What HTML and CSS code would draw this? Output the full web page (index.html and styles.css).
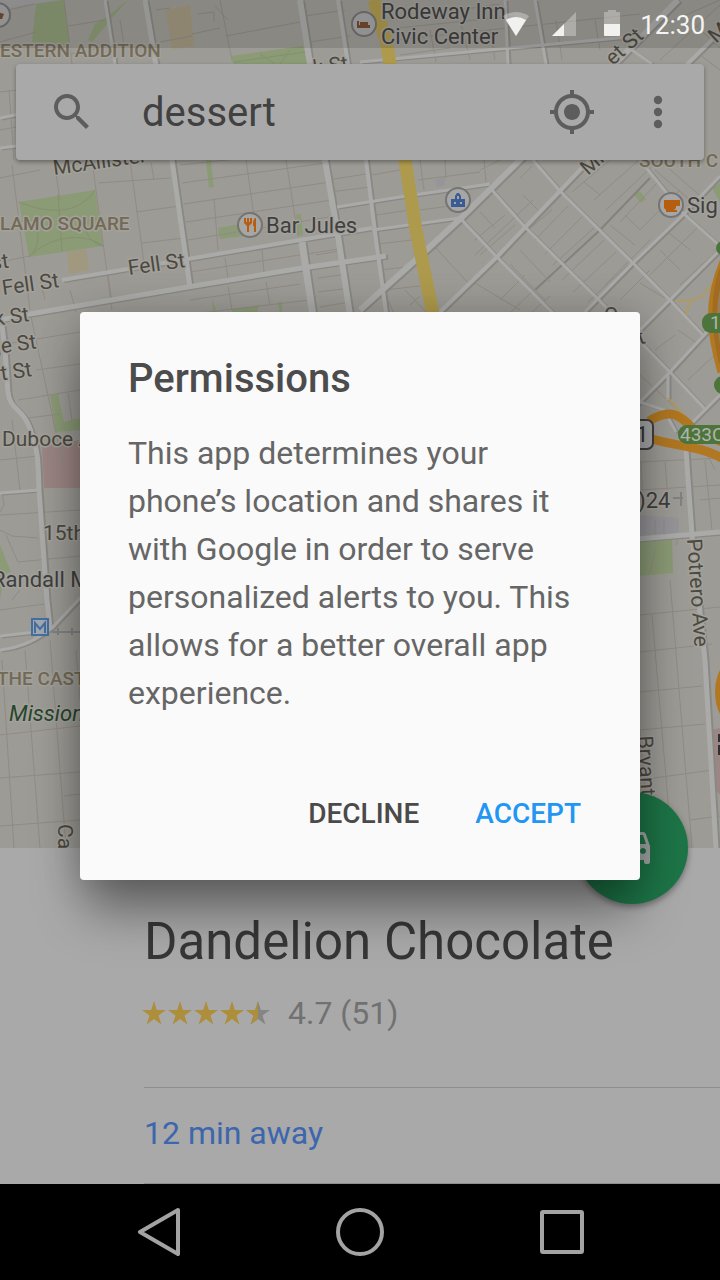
FILE: index.html
```
<!DOCTYPE html>
<html lang="en">
<head>
<meta charset="utf-8">
<meta name="viewport" content="width=device-width, initial-scale=1">
<title>Permissions</title>
<link rel="stylesheet" href="styles.css">
</head>
<body>
<div class="screen">
  <section class="map-area">
    <svg class="map" viewBox="0 0 720 848" preserveAspectRatio="xMidYMin slice" role="img" aria-label="Map">
      <defs>
        <g id="streets">
          <path stroke-width="3" d="M105 0 115 64 M0 118 50 108 M0 148 50 142"/>
          <path stroke-width="5" d="M145 0 172 160 190 287"/>
          <path stroke-width="6" d="M300 0 310 64 325 160 338 236 350 315"/>
          <path stroke-width="4" d="M338 0 348 64 366 160 376 240 386 312"/>
          <path stroke-width="3" d="M505 0 508 64 M535 0 546 64 M360 62 640 36"/>
          <path stroke-width="4" d="M62 280 188 259 300 240 372 228"/>
          <path stroke-width="5" d="M0 320 30 314 188 287 302 268 386 256"/>
          <path stroke-width="7" d="M302 242 313 316"/>
          <path stroke-width="3" d="M337 207 400 197 490 184 M372 230 460 218"/>
          <path stroke-width="6" d="M678 0 520 160 460 219 420 256 360 310"/>
          <path stroke-width="4" d="M720 32 580 170 497 257 440 312"/>
          <path stroke-width="3" d="M720 176 683 215 633 263 585 312 M718 252 668 302 640 330"/>
          <path stroke-width="3" d="M533 160 560 191 633 263 670 300 704 336"/>
          <path stroke-width="3" d="M492 190 525 227 597 298 612 313 670 372 706 410"/>
          <path stroke-width="3" d="M460 218 497 257 556 316"/>
          <path stroke-width="3" d="M632 50 652 64 M640 160 683 213 720 246"/>
          <path stroke-width="3" d="M720 318 670 372 636 406 M720 395 690 425 M668 373V400 M640 402 664 410 676 432"/>
          <path stroke-width="5" d="M686 450 692 535 705 660 716 848 M638 539 720 532"/>
          <path stroke-width="5" d="M2 325 5 350 8 392 C10 412 24 406 32 435 38 450 38 460 39 490L47 600 50 628"/>
          <path stroke-width="3" d="M0 493 39 490 M0 636 45 631 M0 650 C30 647 45 632 52 628L84 594"/>
        </g>
      </defs>
      <rect class="land" width="720" height="848"/>
      <path class="plaza" d="M0 0H56L0 9Z"/>
      <g class="park">
        <path d="M36 4 64 0 70 50 32 42Z"/>
        <path d="M95 24 108 16 128 0 112 18 92 42 88 40Z"/>
        <path d="M231 56 303 46 308 66 234 66Z"/>
        <path d="M19 202 95 190 103 246 29 257Z"/>
        <path d="M206 160 211 160 214 187 209 188Z M218 228 240 224 244 236 220 239Z M296 215 301 214 303 235 298 236Z"/>
        <path d="M232 309 258 306 258 314 232 314Z M212 298 216 310 213 312Z M278 302 282 302 282 314 280 314Z"/>
        <path d="M634 195 640 191 646 199 641 203Z M712 188 720 183 720 202Z"/>
        <path d="M50 395 58 394 64 422 80 418 80 430 56 432Z M0 545 11 572 4 574 0 600Z"/>
        <path d="M640 542 672 540 673 573 640 576Z"/>
      </g>
      <path class="sand" d="M166 10 190 5 194 46 172 50Z M67 252 86 249 89 270 69 274Z"/>
      <path class="hospital" d="M42 446 80 440 80 488 44 488Z M712 730 720 728 720 795 716 790Z"/>
      <path class="building" d="M640 515 679 518 679 533 640 536Z M435 180 445 177 445 185 437 187Z"/>
      <path class="trail" d="M19 202C50 215 80 214 95 190M29 257C50 235 85 232 103 246M58 194 62 251M20 222C40 210 44 245 29 257M100 220C82 212 80 240 103 246M234 62 305 52M260 54 275 64M290 50 280 64"/>
      <path class="alley" d="M0 12 34 4M0 42 36 32M64 0 72 64M68 26 105 20M70 54 108 46M120 20 124 45M156 10 170 8M160 42 192 36M220 0 232 60M192 34 220 28M226 36 300 22M228 20 215 6M197 14 214 12 214 22M305 16 345 10M310 42 350 36"/>
      <path class="alley" d="M390 20 500 4M395 40 640 14M398 28 515 16M400 55 450 48M430 30 436 62M460 20 470 60M490 30 495 60M556 20 562 60M595 20 600 50M640 35 720 0M660 60 720 5M690 20 720 48M700 55 720 70"/>
      <path class="alley" d="M0 92 18 90M9 90 14 160M0 130 16 127M0 178 40 170M12 165 30 310M54 160 60 200M92 160 112 310M130 160 145 270M151 162 154 180M98 183 170 178M136 212 180 206M142 243 184 238M0 262 30 256M70 290 76 312M108 275 112 302M40 280 45 300"/>
      <path class="alley" d="M180 165 320 150M182 183 325 163M184 204 330 182M186 222 332 200M188 240 335 216M246 160 256 230M286 160 298 236M214 198 218 250M190 272 345 248M225 258 228 278M262 250 264 272M190 300 300 284M192 314 310 300M228 286 232 310M266 282 270 305M316 255 345 250M318 278 348 274M318 292 350 288M320 307 350 302M328 180 372 173M330 192 370 187"/>
      <path class="alley" d="M372 175 400 170M376 215 410 210M378 244 412 240M380 270 415 266M384 290 420 286M418 180 480 172M420 210 450 206M420 160 424 190M445 160 446 178M484 160 486 182M388 300 395 316M436 248 470 285M405 290 430 316M410 305 420 296M480 170 500 160M520 178 532 166"/>
      <path class="alley dark" d="M650 178 600 230 535 290"/>
      <path class="alley" d="M533 200 475 255M552 210 512 243M568 206 535 240M582 217 545 254M594 228 553 265M604 240 562 280M616 252 573 292M628 265 588 302M523 195 540 212M480 212 495 228M505 215 475 240M515 225 480 255M470 280 520 310M520 250 550 282M510 264 545 300M525 275 500 300M538 286 510 313M550 296 530 314"/>
      <path class="alley" d="M572 192 610 160M584 182 600 195M594 200 650 150M606 210 680 140M620 222 660 180M610 225 635 245M640 230 680 190M625 215 640 230M655 170 690 200M665 165 705 200M650 275 700 225M660 250 680 270M668 232 690 250M680 285 718 250M605 285 650 240M640 283 665 298M620 300 650 270"/>
      <path class="alley" d="M655 350 675 335M678 330 700 345M640 375 700 430M688 380 720 350M700 440 715 470M640 462 720 458M640 490 720 485M641 462 643 500M665 462 668 500M700 500 720 498M655 520V534M664 520V534M640 615 720 607M640 652 712 644M640 692 702 686M640 730 705 724M640 780 712 770M670 580 692 848M652 615 672 848M640 730 650 848M676 545 678 540M690 820 720 816M655 550 650 573M705 460 712 530"/>
      <path class="alley" d="M30 312 64 470M0 345 80 332M18 400 80 390M28 418 60 414M36 370 80 364M12 420 20 490M68 393 72 420M0 515 80 510M0 460 38 456M2 492 4 505 0 512M0 530 12 536 38 538M6 535 18 562 80 556M48 448 50 460 62 458M0 610 44 604M25 650 40 848M50 640 66 848M76 650 80 700M2 660 14 848M0 735 80 726M0 778 80 772M0 826 80 820M64 796 80 794M12 600 20 590"/>
      <use href="#streets" class="casing"/>
      <use href="#streets" class="street"/>
      <path class="avenue" d="M374 0 387 45 390 64 405 160 416 230 433 314"/>
      <path class="ramp" d="M718 275C703 300 700 300 676 301M690 300 686 315M668 398 692 425"/>
      <path class="freeway" d="M724 262C708 300 710 330 722 372M649 421C670 408 680 414 694 430L722 442M652 439C680 447 700 446 722 458"/>
      <path class="freeway-line" d="M724 270C714 300 716 330 724 362"/>
      <ellipse class="interchange" cx="736" cy="692" rx="21" ry="34"/>

      <g class="label area">
        <text x="0" y="57">ESTERN ADDITION</text>
        <text x="0" y="230">LAMO SQUARE</text>
        <text x="-3" y="685">THE CAST</text>
        <text x="639" y="167">SOUTH C</text>
      </g>
      <g class="label road">
        <text transform="translate(54 175) rotate(-8)">McAllister</text>
        <text transform="translate(129 275) rotate(-8)">Fell St</text>
        <text transform="translate(3 295) rotate(-8)">Fell St</text>
        <text transform="translate(-5 326) rotate(-8)">k St</text>
        <text transform="translate(-10 355) rotate(-8)">ge St</text>
        <text transform="translate(-10 382) rotate(-8)">ht St</text>
        <text transform="translate(-8 270) rotate(-8)">st</text>
        <text x="2" y="446">Duboce A</text>
        <text x="43" y="540">15th</text>
        <text transform="translate(314 75) rotate(-8)">k St</text>
        <text transform="translate(613 66) rotate(-42)">et St</text>
        <text transform="translate(588 176) rotate(-42)">Mis</text>
        <text transform="translate(716 44) rotate(-42)">M</text>
        <text transform="translate(687 539) rotate(86)">Potrero Ave</text>
        <text transform="translate(638 736) rotate(87)">Bryant</text>
        <text transform="translate(58 824) rotate(90)">Ca</text>
        <text x="604" y="322">Q</text>
        <text transform="translate(640 345) rotate(-20)">t</text>
      </g>
      <g class="label spot">
        <text x="381" y="19">Rodeway Inn</text>
        <text x="381" y="44">Civic Center</text>
        <text x="266" y="233">Bar Jules</text>
        <text x="687" y="213">Sig</text>
        <text x="-8" y="587">Randall M</text>
        <text x="638" y="508">)24</text>
        <text class="mission" x="9" y="721">Mission</text>
      </g>
      <g class="pin">
        <circle cx="-2" cy="15" r="12"/><circle cx="364" cy="24" r="12"/><circle cx="250" cy="225" r="12"/><circle cx="458" cy="200" r="12"/><circle cx="671" cy="205" r="12"/>
      </g>
      <path class="pin-brown" d="M357 21h2v4h11v3h-13zM360 22h8v3h-8zM-2 12l6 2-2 5h-4z"/>
      <path class="pin-orange" d="M244 218v5l3 3v6h2v-6l3-3v-5h-2v4h-1v-4h-2v4h-1v-4zM256 218c-3 0-3 5-3 8h1v6h2zM664 200h16v6h-4v2l-2 2h-8l-2-2zM666 210h11v2h-11z"/>
      <path class="pin-blue" fill-rule="evenodd" d="M455 199v-3l2-3h2l2 3v3h4v8h-14v-8zM457 199h2v-3h-2zM454 202h2v2h-2zM460 202h2v2h-2z"/>
      <rect class="metro" x="32" y="619" width="16" height="16"/>
      <path class="metro-mark" d="M35 633V623L40 629 45 623V633"/>
      <path class="rail" d="M52 632H80M58 628V635M72 628V635M673 498H683M681 492V506"/>
      <rect class="shield" x="632" y="420" width="21" height="29" rx="6"/>
      <text class="shield-text" x="636" y="442">1</text>
      <g class="exit"><rect x="678" y="425" width="60" height="19" rx="9"/><rect x="702" y="313" width="40" height="20" rx="9"/><circle cx="723" cy="385" r="9"/><circle cx="723" cy="248" r="7"/></g>
      <text class="exit-text" x="680" y="441">433C</text>
      <text class="exit-text" x="710" y="329">1</text>
      <path class="mark" d="M718 734h2v8h-2zM718 745h2v10h-2z"/>
    </svg>

    <header class="status-bar">
      <svg class="status-icon" viewBox="0 0 48 24" aria-hidden="true"><path class="faint" d="M11 4Q24-4 37 4L24 24Z"/><path d="M14 8Q24 2 34 8L24 24Z"/></svg>
      <svg class="status-icon" viewBox="0 0 48 24" aria-hidden="true"><path class="faint" d="M12 24 36 0V24Z"/><path d="M12 24 24 12V24Z"/></svg>
      <svg class="status-icon" viewBox="0 0 48 24" aria-hidden="true"><path class="faint" d="M16 12V1Q16 0 17 0H20V-2H28V0H31Q32 0 32 1V12Z"/><path d="M16 12H32V23Q32 24 31 24H17Q16 24 16 23Z"/></svg>
      <time class="clock">12:30</time>
    </header>

    <form class="search-bar" role="search">
      <svg class="icon" viewBox="0 0 24 24" aria-hidden="true"><path d="M15.500 14h-.79l-.28-.27C15.410 12.590 16 11.110 16 9.500 16 5.910 13.090 3 9.500 3S3 5.910 3 9.500 5.910 16 9.500 16c1.610 0 3.090-.59 4.230-1.570l.27.280v.79l5 4.990L20.490 19l-4.990-5zm-6 0C7.010 14 5 11.990 5 9.500S7.010 5 9.500 5 14 7.010 14 9.500 11.990 14 9.500 14z"/></svg>
      <input class="search-input" type="text" value="dessert" aria-label="Search">
      <button class="icon-button" type="button" aria-label="My location"><svg class="icon" viewBox="0 0 24 24"><path d="M12 8c-2.210 0-4 1.790-4 4s1.790 4 4 4 4-1.790 4-4-1.790-4-4-4zm8.940 3c-.46-4.170-3.770-7.480-7.940-7.940V1h-2v2.060C6.830 3.520 3.520 6.830 3.060 11H1v2h2.060c.46 4.170 3.770 7.480 7.940 7.940V23h2v-2.060c4.170-.46 7.480-3.770 7.940-7.940H23v-2h-2.060zM12 19c-3.870 0-7-3.130-7-7s3.130-7 7-7 7 3.130 7 7-3.130 7-7 7z"/></svg></button>
      <button class="icon-button" type="button" aria-label="More options"><svg class="icon" viewBox="0 0 24 24"><circle cx="12" cy="6" r="2.100"/><circle cx="12" cy="12" r="2.100"/><circle cx="12" cy="18" r="2.100"/></svg></button>
    </form>
  </section>

  <main class="place">
    <button class="directions" type="button" aria-label="Directions"><svg class="icon" viewBox="0 1 24 24"><path d="M18.920 6.010C18.720 5.420 18.160 5 17.500 5h-11c-.66 0-1.210.42-1.420 1.010L3 12v8c0 .55.450 1 1 1h1c.55 0 1-.45 1-1v-1h12v1c0 .55.450 1 1 1h1c.55 0 1-.45 1-1v-8l-2.080-5.990zM6.500 16c-.83 0-1.500-.67-1.500-1.500S5.670 13 6.500 13s1.500.67 1.500 1.500S7.330 16 6.500 16zm11 0c-.83 0-1.500-.67-1.500-1.500s.67-1.500 1.500-1.500 1.500.67 1.500 1.500-.67 1.500-1.500 1.500zM5 11l1.500-4.500h11L19 11H5z"/></svg></button>
    <h1 class="place-name">Dandelion Chocolate</h1>
    <div class="rating">
      <svg class="stars" viewBox="0 0 128 24" role="img" aria-label="4.5 of 5 stars">
        <defs><path id="star" d="M12 0 14.800 9H24L16.500 14.500 19.400 23.500 12 18 4.600 23.500 7.500 14.500 0 9H9.200Z"/></defs>
        <use href="#star"/><use href="#star" x="26"/><use href="#star" x="52"/><use href="#star" x="78"/>
        <use href="#star" x="104" class="star-empty"/><path d="M116 0V18L108.600 23.500 111.500 14.500 104 9H113.200Z"/>
      </svg>
      <span>4.7 (51)</span>
    </div>
    <a class="travel" href="#">12 min away</a>
  </main>

  <nav class="nav-bar" aria-label="System">
    <button class="nav-button" type="button" aria-label="Back"><svg viewBox="0 0 48 48"><path d="M42 2 4 24 42 46Z"/></svg></button>
    <button class="nav-button" type="button" aria-label="Home"><svg viewBox="0 0 48 48"><circle cx="24" cy="24" r="22"/></svg></button>
    <button class="nav-button" type="button" aria-label="Recent apps"><svg viewBox="0 0 48 48"><rect x="6" y="4" width="40" height="40" rx="1"/></svg></button>
  </nav>

  <div class="overlay">
    <section class="dialog" role="dialog" aria-modal="true" aria-labelledby="dialog-title">
      <h2 class="dialog-title" id="dialog-title">Permissions</h2>
      <p class="dialog-text">This app determines your phone’s location and shares it with Google in order to serve personalized alerts to you. This allows for a better overall app experience.</p>
      <div class="dialog-actions">
        <button class="action" type="button">DECLINE</button>
        <button class="action accept" type="button">ACCEPT</button>
      </div>
    </section>
  </div>
</div>
</body>
</html>
```
FILE: styles.css
```
* { box-sizing: border-box; }
body { margin: 0; font-family: Roboto, "Liberation Sans", sans-serif; background: #a9a9a9; }
button { border: 0; padding: 0; background: none; font: inherit; color: inherit; }
h1, h2, p { margin: 0; }

.screen { position: relative; display: flex; flex-direction: column; min-height: 100vh; overflow: hidden; }
.map-area { position: relative; flex: 1; }

/* Map */
.map { position: absolute; inset: 0; width: 100%; height: 100%; }
.map path { fill: none; }
.map .land { fill: #9d9b95; }
.map .plaza { fill: #a0a0a0; }
.map .park path { fill: #8b9b76; }
.map .sand { fill: #a19880; }
.map .hospital { fill: #9c8685; }
.map .building { fill: #95959a; }
.map .trail { stroke: #84906f; stroke-width: 1; }
.map .alley { stroke: #918b84; stroke-width: 1; }
.map .dark { stroke: #85827d; stroke-width: 2; }
.casing { stroke: #8a8884; transform: translate(2px, 1px); }
.street { stroke: #aaaaa9; }
.map .avenue { stroke: #ae9a4c; stroke-width: 13; }
.map .ramp { stroke: #b09a63; stroke-width: 2; }
.map .freeway { stroke: #b17721; stroke-width: 9; }
.map .freeway-line { stroke: #94621f; stroke-width: 10; opacity: .5; }
.interchange { fill: #b17721; }
.label text { paint-order: stroke; stroke: #a3a19b; stroke-width: 3px; stroke-linejoin: round; }
.area { font-size: 19px; font-weight: 500; fill: #736a56; }
.road { font-size: 21px; fill: #4c4940; }
.spot { font-size: 22px; fill: #3f3f3f; }
.spot .mission { fill: #27452d; font-style: italic; }
.pin circle { fill: #a6a6a5; stroke: #747474; stroke-width: 2; }
.map .pin-brown { fill: #744c33; }
.map .pin-orange { fill: #b75d10; }
.map .pin-blue { fill: #3b5b97; }
.metro { fill: #a0a9b1; stroke: #456f9f; stroke-width: 2; }
.map .metro-mark { stroke: #456f9f; stroke-width: 2; }
.map .rail { stroke: #828282; stroke-width: 2; }
.shield { fill: #a9a9a9; stroke: #404040; stroke-width: 2; }
.shield-text { font-size: 22px; fill: #333; }
.exit { fill: #4d743b; }
.exit-text { font-size: 19px; fill: #afb5aa; }
.map .mark { fill: #303030; }

/* Status bar */
.status-bar { position: relative; display: flex; align-items: center; justify-content: flex-end; height: 48px; padding-right: 15px; background: rgba(0, 0, 0, .12); }
.status-icon { width: 48px; height: 24px; fill: #f1f1f0; overflow: visible; }
.status-icon .faint { opacity: .35; }
.clock { margin-left: 4px; padding-top: 2px; font-size: 26px; line-height: 32px; color: #f4f4f3; }

/* Search */
.search-bar { position: relative; display: flex; align-items: center; height: 96px; margin: 16px; padding: 0 22px 0 32px; border-radius: 4px; background: #a9a9a9; box-shadow: 0 2px 4px rgba(0, 0, 0, .35); }
.icon { display: block; flex: none; width: 48px; height: 48px; fill: #5d5d5d; }
.icon-button { margin-left: 38px; }
.search-input { flex: 1; min-width: 0; margin-left: 46px; padding: 2px 0 0; border: 0; outline: 0; background: none; font: 400 40px/48px Roboto, "Liberation Sans", sans-serif; color: #414141; }

/* Place card */
.place { position: relative; padding: 62px 0 0 144px; background: #a9a9a9; }
.directions { position: absolute; top: -56px; right: 32px; display: grid; place-items: center; width: 112px; height: 112px; border-radius: 50%; background: #1d7547; box-shadow: 0 3px 6px rgba(0, 0, 0, .35); }
.directions .icon { fill: #a3a8a5; }
.place-name { font-size: 51px; font-weight: 400; line-height: 64px; color: #363636; }
.rating { display: flex; align-items: center; gap: 18px; margin: 19px 0 54px -2px; font-size: 32px; line-height: 40px; color: #717171; }
.stars { width: 128px; height: 24px; fill: #ac8e3b; }
.star-empty { fill: #858585; }
.travel { display: block; padding: 25px 0 30px; border: solid #8e8e8e; border-width: 1px 0; font-size: 32px; line-height: 40px; color: #3c66ad; text-decoration: none; }

/* System navigation */
.nav-bar { display: flex; align-items: center; justify-content: center; gap: 152px; height: 96px; background: #000; }
.nav-button { width: 48px; height: 48px; }
.nav-button svg { display: block; fill: none; stroke: #a3a3a3; stroke-width: 4; stroke-linejoin: round; }

/* Dialog */
.overlay { position: absolute; inset: 0 0 96px; display: grid; align-items: center; padding: 8px 80px 0; }
.dialog { padding: 43px 31px 31px 48px; border-radius: 4px; background: #fafafa; box-shadow: 0 36px 48px -6px rgba(0, 0, 0, .4), 0 0 40px rgba(0, 0, 0, .2); }
.dialog-title { font-size: 40px; font-weight: 500; line-height: 48px; color: #4c4c4c; }
.dialog-text { margin: 26px 17px 60px 0; font-size: 32px; line-height: 48px; color: #666; }
.dialog-actions { display: flex; justify-content: flex-end; }
.action { height: 72px; padding: 0 28px; font-size: 28px; font-weight: 500; color: #4a4a4a; }
.accept { color: #2196f3; }
```
